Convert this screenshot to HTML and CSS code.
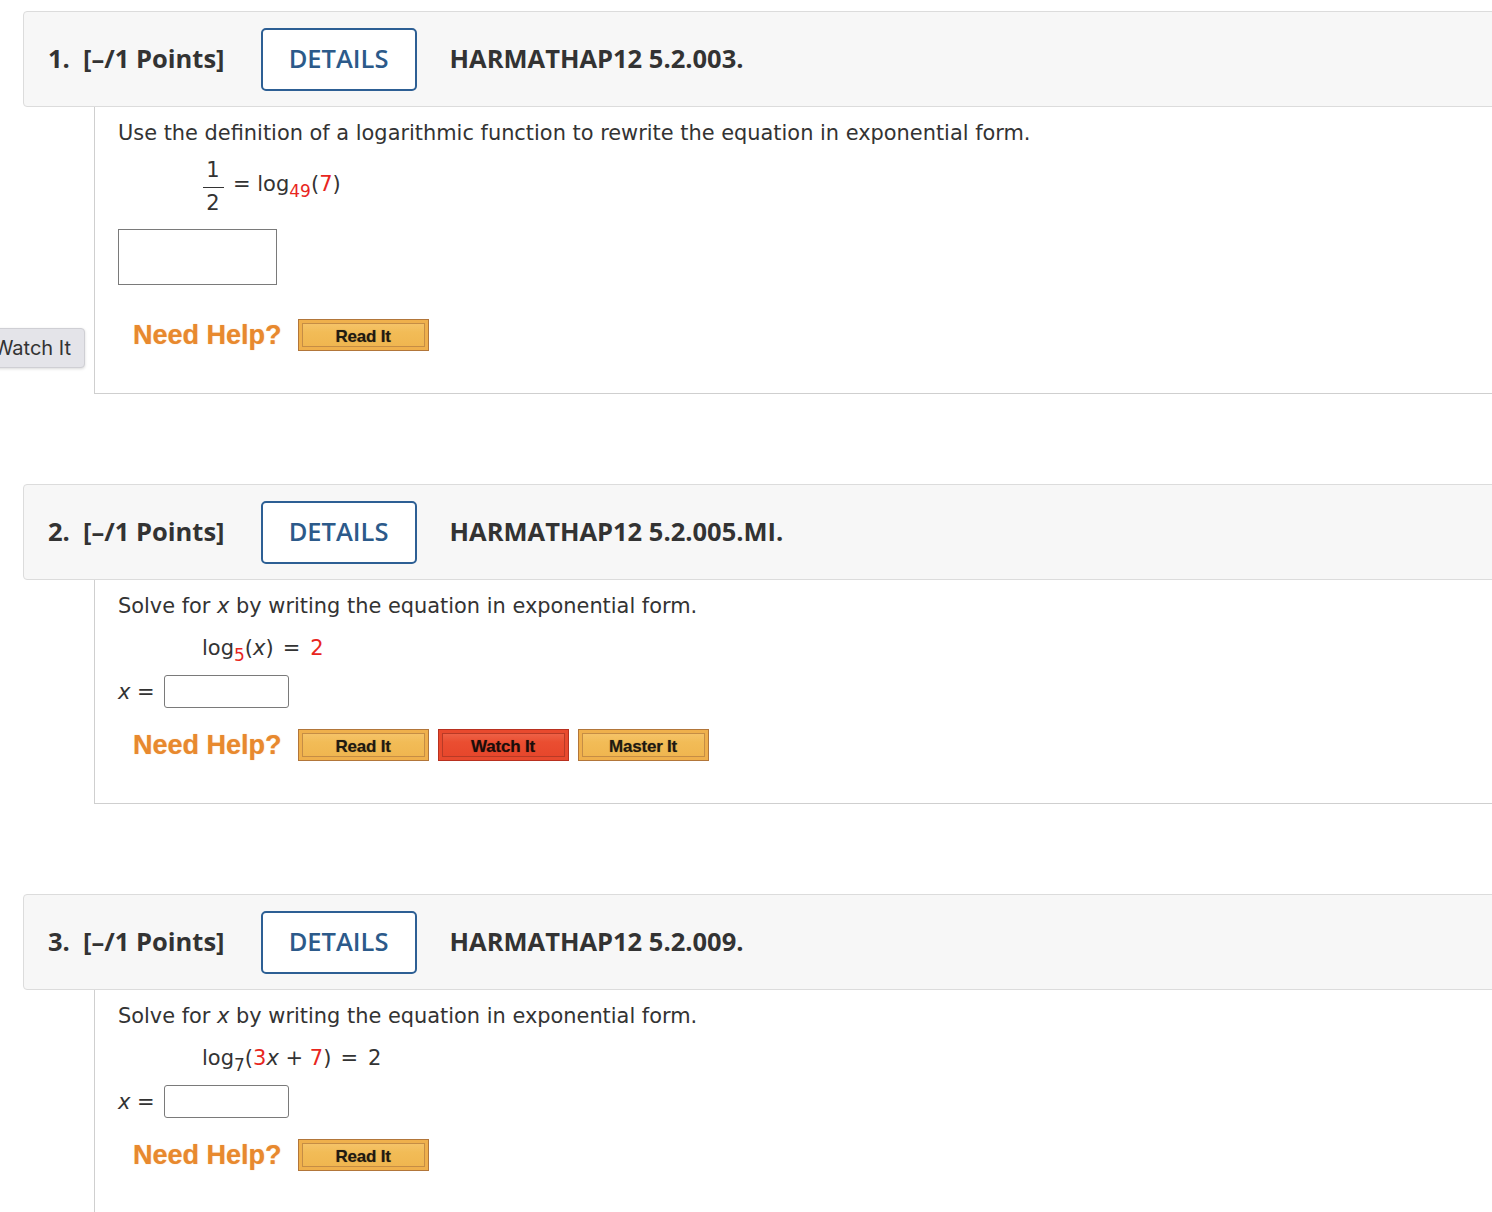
FILE: index.html
```html
<!DOCTYPE html>
<html>
<head>
<meta charset="utf-8">
<link rel="stylesheet" href="styles.css">
</head>
<body>
<div class="page">

  <section class="question">
    <div class="q-head">
      <span class="q-num">1.&nbsp; [–/1 Points]</span>
      <button class="details">DETAILS</button>
      <span class="q-code">HARMATHAP12 5.2.003.</span>
    </div>
    <div class="q-body">
      <p class="prompt">Use the definition of a logarithmic function to rewrite the equation in exponential form.</p>
      <div class="eq eq-frac">
        <span class="frac"><span class="num">1</span><span class="bar"></span><span class="den">2</span></span>
        <span class="eq-rest">= log<sub class="red">49</sub>(<span class="red">7</span>)</span>
      </div>
      <div class="big-input"></div>
      <div class="help help-1">
        <span class="need-help">Need Help?</span>
        <span class="hbtn">Read It</span>
      </div>
    </div>
    <div class="tooltip">Watch It</div>
  </section>

  <section class="question">
    <div class="q-head">
      <span class="q-num">2.&nbsp; [–/1 Points]</span>
      <button class="details">DETAILS</button>
      <span class="q-code">HARMATHAP12 5.2.005.MI.</span>
    </div>
    <div class="q-body">
      <p class="prompt">Solve for <i>x</i> by writing the equation in exponential form.</p>
      <div class="eq">log<sub class="red">5</sub>(<i>x</i>)<span class="op">=</span><span class="red">2</span></div>
      <div class="answer-row"><i>x</i> =<span class="small-input"></span></div>
      <div class="help">
        <span class="need-help">Need Help?</span>
        <span class="hbtn">Read It</span>
        <span class="hbtn hbtn-red">Watch It</span>
        <span class="hbtn">Master It</span>
      </div>
    </div>
  </section>

  <section class="question last">
    <div class="q-head">
      <span class="q-num">3.&nbsp; [–/1 Points]</span>
      <button class="details">DETAILS</button>
      <span class="q-code">HARMATHAP12 5.2.009.</span>
    </div>
    <div class="q-body">
      <p class="prompt">Solve for <i>x</i> by writing the equation in exponential form.</p>
      <div class="eq">log<sub>7</sub>(<span class="red">3</span><i>x</i> + <span class="red">7</span>)<span class="op">=</span>2</div>
      <div class="answer-row"><i>x</i> =<span class="small-input"></span></div>
      <div class="help">
        <span class="need-help">Need Help?</span>
        <span class="hbtn">Read It</span>
      </div>
    </div>
  </section>

</div>
</body>
</html>
```

FILE: styles.css
```css
html, body {
  margin: 0;
  padding: 0;
  background: #ffffff;
  overflow: hidden;
}

.page {
  width: 1492px;
  height: 1212px;
  overflow: hidden;
  padding-top: 11px;
  box-sizing: border-box;
}

.question {
  position: relative;
  margin-left: 23px;
  width: 1500px;
  margin-bottom: 90px;
}

.q-head {
  box-sizing: border-box;
  height: 96px;
  display: flex;
  align-items: center;
  padding-left: 24px;
  background: #f7f7f7;
  border: 1px solid #dcdcdc;
  border-radius: 4px 0 0 4px;
  font-family: "Open Sans", "Liberation Sans", sans-serif;
  font-weight: 700;
  font-size: 25.5px;
  color: #333333;
}

.q-num,
.q-code {
  position: relative;
  top: -1px;
}

.q-num {
  white-space: pre;
}

.details {
  box-sizing: border-box;
  margin-left: 36px;
  width: 156px;
  height: 63px;
  border: 2px solid #2d5f94;
  border-radius: 5px;
  background: #ffffff;
  color: #2c5a8a;
  font-family: "Open Sans", "Liberation Sans", sans-serif;
  font-size: 25.5px;
  font-weight: 600;
  padding: 0 0 2px 0;
}

.q-code {
  margin-left: 33px;
}

.q-body {
  margin-left: 71px;
  border-left: 1px solid #cfcfcf;
  border-bottom: 1px solid #cfcfcf;
  padding: 13px 0 42px 23px;
  font-family: "DejaVu Sans", Verdana, sans-serif;
  font-size: 21px;
  color: #333333;
}

.question.last .q-body {
  border-bottom: none;
}

.prompt {
  margin: 0;
  line-height: 26px;
  font-size: 20.9px;
}

.eq {
  margin: 16px 0 0 84px;
  line-height: 26px;
}

.op {
  margin: 0 10px 0 9px;
}

.eq-frac {
  display: flex;
  align-items: center;
  margin-top: 14px;
}

.frac {
  display: inline-flex;
  flex-direction: column;
  align-items: center;
  width: 22px;
}

.num, .den {
  line-height: 20px;
}

.num {
  padding-bottom: 7px;
}

.den {
  padding-top: 5px;
}

.bar {
  width: 21px;
  height: 1px;
  background: #333333;
}

.eq-rest {
  line-height: 26px;
  position: relative;
  top: -3px;
  margin-left: 9px;
}

sub {
  font-size: 17px;
  line-height: 0;
  vertical-align: -6px;
}

.red {
  color: #e8261e;
}

i {
  font-style: italic;
}

.big-input {
  margin-top: 16px;
  width: 159px;
  height: 56px;
  box-sizing: border-box;
  border: 1px solid #7a7a7a;
  background: #ffffff;
}

.answer-row {
  display: flex;
  align-items: center;
  margin-top: 14px;
  height: 33px;
  white-space: pre;
}

.small-input {
  display: inline-block;
  margin-left: 9px;
  width: 125px;
  height: 33px;
  box-sizing: border-box;
  border: 1px solid #7a7a7a;
  border-radius: 3px;
  background: #ffffff;
}

.help {
  display: flex;
  align-items: center;
  margin-top: 21px;
  margin-left: 15px;
  height: 32px;
}

.help-1 {
  margin-top: 34px;
}

.need-help {
  font-family: "Liberation Sans", Arial, sans-serif;
  font-weight: 700;
  font-size: 27px;
  color: #e8892e;
  margin-right: 16px;
  text-shadow: 0 0 1px rgba(232, 137, 46, 0.6);
}

.hbtn {
  box-sizing: border-box;
  width: 131px;
  height: 32px;
  margin-right: 9px;
  border: 1px solid #b2763a;
  background: linear-gradient(#f7c770 0%, #f2bc57 40%, #efb44e 100%);
  padding: 5px 4px 1px;
  display: flex;
  font-family: "Liberation Sans", Arial, sans-serif;
  font-weight: 700;
  font-size: 17px;
  color: #1f1a12;
  justify-content: center;
  align-items: center;
  box-shadow: inset 0 0 0 3px #efb04c, inset 0 0 0 4px #c58d45;
  text-shadow: 0 0 1px rgba(0, 0, 0, 0.4);
  letter-spacing: -0.2px;
}

.hbtn-red {
  border-color: #b8301f;
  background: linear-gradient(#f06a50 0%, #ea4e31 40%, #e6452a 100%);
  box-shadow: inset 0 0 0 3px #e84a2e, inset 0 0 0 4px #b83a26;
  color: #1a0d0a;
}

.tooltip {
  position: absolute;
  left: -33px;
  top: 317px;
  box-sizing: border-box;
  width: 95px;
  height: 40px;
  padding-right: 13px;
  text-align: right;
  line-height: 38px;
  background: #e4e4e9;
  border: 1px solid #cfcfd4;
  border-radius: 4px;
  box-shadow: 0 1px 3px rgba(0, 0, 0, 0.15);
  font-family: Inter, "Liberation Sans", sans-serif;
  font-size: 20px;
  color: #333333;
  white-space: nowrap;
  overflow: hidden;
}
```
